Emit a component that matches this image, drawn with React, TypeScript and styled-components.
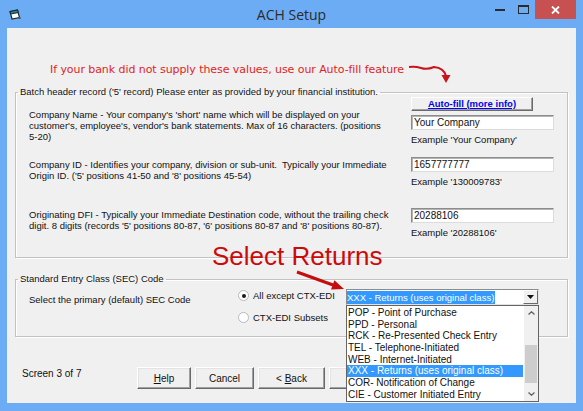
import React from "react";
import styled, { createGlobalStyle } from "styled-components";

const GlobalStyle = createGlobalStyle`
  html, body {
    margin: 0;
    padding: 0;
    background: #6cacf4;
  }
  body {
    font-family: "Liberation Sans", Arial, sans-serif;
  }
`;

const Frame = styled.div`
  width: 583px;
  height: 411px;
  box-sizing: border-box;
  padding: 0 7px 8px 7px;
  background: #6cacf4;
  display: flex;
  flex-direction: column;
  overflow: hidden;
`;

/* ---------- title bar ---------- */

const TitleBar = styled.div`
  height: 28px;
  flex: 0 0 28px;
  display: grid;
  grid-template-columns: 1fr auto 1fr;
  align-items: start;
`;

const AppIcon = styled.svg`
  margin: 9px 0 0 2px;
`;

const Title = styled.div`
  font-family: "Open Sans", "Noto Sans", sans-serif;
  font-size: 14px;
  line-height: 26px;
  padding-top: 2px;
  color: #2b2b2b;
`;

const Controls = styled.div`
  justify-self: end;
  display: flex;
  align-items: stretch;
  height: 19px;
`;

const CtrlButton = styled.div<{ $w: number; $close?: boolean }>`
  width: ${(p) => p.$w}px;
  display: flex;
  align-items: center;
  justify-content: center;
  background: ${(p) => (p.$close ? "#c75050" : "transparent")};
`;

/* ---------- client area ---------- */

const Client = styled.div`
  flex: 1;
  position: relative;
  background: #f0f0f0;
  padding: 0 8px;
  display: flex;
  flex-direction: column;
  font-size: 9.5px;
  color: #111;
`;

const Hint = styled.div`
  margin-top: 35px;
  padding-left: 35px;
  line-height: 14px;
  font-family: "DejaVu Sans", sans-serif;
  font-size: 11px;
  letter-spacing: -0.07px;
  color: #e21d25;
`;

const Group = styled.fieldset<{ $top: number }>`
  margin: ${(p) => p.$top}px 0 0;
  padding: 0;
  min-width: 0;
  border: 1px solid #c2c2c2;
  box-shadow: 1px 1px 0 #fff, inset 1px 1px 0 #fff;
`;

const GroupTitle = styled.legend`
  margin-left: 2px;
  padding: 0 2px;
  line-height: 12px;
`;

const GroupBody = styled.div<{ $bottom: number }>`
  padding: 0 13px ${(p) => p.$bottom}px;
`;

const FieldRow = styled.div<{ $top: number }>`
  display: grid;
  grid-template-columns: 1fr 143px;
  column-gap: 8px;
  margin-top: ${(p) => p.$top}px;
`;

const Desc = styled.div<{ $pad: number }>`
  padding-top: ${(p) => p.$pad}px;
  line-height: 11px;
  white-space: nowrap;
`;

const FieldCol = styled.div`
  display: flex;
  flex-direction: column;
`;

const LinkButton = styled.div`
  width: 122px;
  height: 14px;
  box-sizing: border-box;
  margin-bottom: 4px;
  background: #f0f0f0;
  border: 1px solid;
  border-color: #fff #6a6a6a #6a6a6a #fff;
  box-shadow: inset -1px -1px 0 #a0a0a0;
  display: flex;
  align-items: center;
  justify-content: center;
  font-weight: bold;
  color: #0000f0;
  text-decoration: underline;
  line-height: 12px;
`;

const TextBox = styled.div`
  height: 15px;
  box-sizing: border-box;
  background: #fff;
  border: 1px solid;
  border-color: #8c8c8c #dcdcdc #dcdcdc #8c8c8c;
  box-shadow: inset 1px 1px 0 #b4b4b4;
  padding-left: 2px;
  line-height: 13px;
  font-size: 10px;
`;

const Example = styled.div`
  margin-top: 4px;
  line-height: 11px;
`;

/* ---------- SEC code group ---------- */

const SecRow = styled.div`
  display: flex;
  align-items: flex-start;
`;

const SecLabel = styled.div`
  flex: 0 0 208px;
  padding-top: 9px;
  line-height: 11px;
`;

const RadioCol = styled.div`
  flex: 0 0 109px;
  padding-top: 4px;
  display: flex;
  flex-direction: column;
  gap: 9px;
`;

const RadioItem = styled.div`
  display: flex;
  align-items: center;
  gap: 4px;
  height: 13px;
  padding-left: 1px;
`;

const RadioDot = styled.span<{ $on?: boolean }>`
  width: 11px;
  height: 11px;
  box-sizing: border-box;
  border-radius: 50%;
  border: 1px solid #b9b9b9;
  background: #fff;
  display: flex;
  align-items: center;
  justify-content: center;
  &::after {
    content: "";
    width: 4px;
    height: 4px;
    border-radius: 50%;
    background: ${(p) => (p.$on ? "#1a1a1a" : "transparent")};
  }
`;

const Combo = styled.div`
  margin-top: 4px;
  width: 193px;
  height: 16px;
  box-sizing: border-box;
  background: #fff;
  border: 1px solid;
  border-color: #8c8c8c #e3e3e3 #e3e3e3 #8c8c8c;
  display: flex;
  align-items: stretch;
`;

const ComboText = styled.div`
  flex: 1;
  display: flex;
  align-items: center;
`;

const Selected = styled.span`
  background: #3399ff;
  color: #fff;
  line-height: 13px;
  padding-right: 1px;
`;

const ComboArrow = styled.div`
  width: 15px;
  box-sizing: border-box;
  background: #f0f0f0;
  border: 1px solid;
  border-color: #fff #6a6a6a #6a6a6a #fff;
  display: flex;
  align-items: center;
  justify-content: center;
`;

/* ---------- footer ---------- */

const Footer = styled.div`
  margin-top: 30px;
  padding-left: 7px;
  display: flex;
  align-items: flex-start;
  gap: 4px;
`;

const ScreenLabel = styled.div`
  flex: 0 0 111px;
  line-height: 11px;
  padding-top: 1px;
  font-size: 10px;
`;

const PushButton = styled.div<{ $w: number }>`
  width: ${(p) => p.$w}px;
  height: 22px;
  box-sizing: border-box;
  background: #f0f0f0;
  border: 1px solid;
  border-color: #fff #696969 #696969 #fff;
  box-shadow: inset -1px -1px 0 #a0a0a0, inset 1px 1px 0 #e3e3e3;
  display: flex;
  align-items: center;
  justify-content: center;
  font-size: 10px;
  u {
    text-decoration: underline;
  }
`;

/* ---------- overlays: notes and open list ---------- */

const Note = styled.div`
  position: absolute;
  left: 205px;
  top: 215px;
  font-size: 26px;
  line-height: 26px;
  color: #cc0a0a;
  white-space: nowrap;
`;

const NoteArrow = styled.svg<{ $x: number; $y: number }>`
  position: absolute;
  left: ${(p) => p.$x}px;
  top: ${(p) => p.$y}px;
  overflow: visible;
`;

const DropList = styled.div`
  position: absolute;
  left: 339px;
  top: 277px;
  width: 193px;
  box-sizing: border-box;
  background: #fff;
  border: 1px solid #646464;
  display: flex;
`;

const Items = styled.div`
  flex: 1;
  padding: 1px 0;
`;

const DropItem = styled.div<{ $selected?: boolean }>`
  height: 11.66px;
  line-height: 11.66px;
  padding-left: 1px;
  margin-right: 1px;
  font-size: 10px;
  white-space: nowrap;
  background: ${(p) => (p.$selected ? "#3399ff" : "transparent")};
  color: ${(p) => (p.$selected ? "#fff" : "#111")};
`;

const ScrollBar = styled.div`
  flex: 0 0 14px;
  background: #f0f0f0;
  display: flex;
  flex-direction: column;
`;

const ScrollBtn = styled.div`
  height: 14px;
  display: flex;
  align-items: center;
  justify-content: center;
`;

const ScrollTrack = styled.div`
  flex: 1;
  display: flex;
  flex-direction: column;
  padding: 0 1px;
`;

const Thumb = styled.div`
  height: 38px;
  background: #cdcdcd;
`;

const secCodes = [
  "POP - Point of Purchase",
  "PPD - Personal",
  "RCK - Re-Presented Check Entry",
  "TEL - Telephone-Initiated",
  "WEB - Internet-Initiated",
  "XXX - Returns (uses original class)",
  "COR- Notification of Change",
  "CIE - Customer Initiated Entry",
];

const selectedCode = 5;
const thumbOffset = 25;

export default function App() {
  return (
    <Frame>
      <GlobalStyle />
      <TitleBar>
        <AppIcon width="12" height="11" viewBox="0 0 12 11">
          <path d="M1 2.5 L8.5 1 L10.5 8.5 L3 10 Z" fill="#fff" stroke="#1d2a30" strokeWidth="1.2" />
          <path d="M1 2.5 L8.5 1 L9.2 3.6 L1.7 5 Z" fill="#1b8a8a" stroke="#1d2a30" strokeWidth="1" />
          <rect x="9.6" y="8" width="2" height="2" fill="#555" />
        </AppIcon>
        <Title>ACH Setup</Title>
        <Controls>
          <CtrlButton $w={25}>
            <svg width="10" height="2" viewBox="0 0 10 2">
              <rect width="10" height="2" fill="#2b2b2b" />
            </svg>
          </CtrlButton>
          <CtrlButton $w={23}>
            <svg width="11" height="9" viewBox="0 0 11 9">
              <rect x="0.5" y="0.5" width="10" height="8" fill="none" stroke="#2b2b2b" />
              <rect x="0" y="0" width="11" height="2" fill="#2b2b2b" />
            </svg>
          </CtrlButton>
          <CtrlButton $w={41} $close>
            <svg width="9" height="8" viewBox="0 0 9 8">
              <path d="M1 0.5 L8 7.5 M8 0.5 L1 7.5" stroke="#fff" strokeWidth="1.8" />
            </svg>
          </CtrlButton>
        </Controls>
      </TitleBar>

      <Client>
        <Hint>If your bank did not supply these values, use our Auto-fill feature</Hint>

        <Group $top={9}>
          <GroupTitle>Batch header record ('5' record) Please enter as provided by your financial institution.</GroupTitle>
          <GroupBody $bottom={19}>
            <FieldRow $top={-1}>
              <Desc $pad={12}>
                Company Name - Your company's 'short' name which will be displayed on your
                <br />
                customer's, employee's, vendor's bank statements. Max of 16 characters. (positions
                <br />
                5-20)
              </Desc>
              <FieldCol>
                <LinkButton>Auto-fill (more info)</LinkButton>
                <TextBox>Your Company</TextBox>
                <Example>Example 'Your Company'</Example>
              </FieldCol>
            </FieldRow>

            <FieldRow $top={12}>
              <Desc $pad={2}>
                Company ID - Identifies your company, division or sub-unit.&nbsp; Typically your Immediate
                <br />
                Origin ID. ('5' positions 41-50 and '8' positions 45-54)
              </Desc>
              <FieldCol>
                <TextBox>1657777777</TextBox>
                <Example>Example '130009783'</Example>
              </FieldCol>
            </FieldRow>

            <FieldRow $top={21}>
              <Desc $pad={1}>
                Originating DFI - Typically your Immediate Destination code, without the trailing check
                <br />
                digit. 8 digits (records '5' positions 80-87, '6' positions 80-87 and '8' positions 80-87).
              </Desc>
              <FieldCol>
                <TextBox>20288106</TextBox>
                <Example>Example '20288106'</Example>
              </FieldCol>
            </FieldRow>
          </GroupBody>
        </Group>

        <Group $top={15}>
          <GroupTitle>Standard Entry Class (SEC) Code</GroupTitle>
          <GroupBody $bottom={12}>
            <SecRow>
              <SecLabel>Select the primary (default) SEC Code</SecLabel>
              <RadioCol>
                <RadioItem>
                  <RadioDot $on />
                  All except CTX-EDI
                </RadioItem>
                <RadioItem>
                  <RadioDot />
                  CTX-EDI Subsets
                </RadioItem>
              </RadioCol>
              <Combo>
                <ComboText>
                  <Selected>{secCodes[selectedCode]}</Selected>
                </ComboText>
                <ComboArrow>
                  <svg width="7" height="4" viewBox="0 0 7 4">
                    <path d="M0 0 H7 L3.5 4 Z" fill="#111" />
                  </svg>
                </ComboArrow>
              </Combo>
            </SecRow>
          </GroupBody>
        </Group>

        <Footer>
          <ScreenLabel>Screen 3 of 7</ScreenLabel>
          <PushButton $w={54}>
            <span>
              <u>H</u>elp
            </span>
          </PushButton>
          <PushButton $w={59}>Cancel</PushButton>
          <PushButton $w={67}>
            <span>
              &lt; <u>B</u>ack
            </span>
          </PushButton>
          {/* next button sits under the open list */}
          <PushButton $w={65} />
        </Footer>

        {/* curved pointer toward the Auto-fill button */}
        <NoteArrow $x={399} $y={36} width="48" height="22" viewBox="0 0 48 22">
          <path d="M3 3 Q9 2 15 4 T28 3 Q38 4 40 12" fill="none" stroke="#c8141c" strokeWidth="2" />
          <path d="M35.5 11 H44.5 L40 19 Z" fill="#c8141c" />
        </NoteArrow>

        <Note>Select Returns</Note>
        <NoteArrow $x={288} $y={240} width="54" height="26" viewBox="0 0 54 26">
          <path d="M2 4 L38 17" stroke="#c40d0d" strokeWidth="3" />
          <path d="M49 21 L36 21.6 L39.4 12.2 Z" fill="#c40d0d" />
        </NoteArrow>

        <DropList>
          <Items>
            {secCodes.map((code, i) => (
              <DropItem key={code} $selected={i === selectedCode}>
                {code}
              </DropItem>
            ))}
          </Items>
          <ScrollBar>
            <ScrollBtn>
              <svg width="7" height="4" viewBox="0 0 7 4">
                <path d="M0.5 3.5 L3.5 0.8 L6.5 3.5" fill="none" stroke="#606060" strokeWidth="1.3" />
              </svg>
            </ScrollBtn>
            <ScrollTrack>
              <Thumb style={{ marginTop: thumbOffset }} />
            </ScrollTrack>
            <ScrollBtn>
              <svg width="7" height="4" viewBox="0 0 7 4">
                <path d="M0.5 0.5 L3.5 3.2 L6.5 0.5" fill="none" stroke="#606060" strokeWidth="1.3" />
              </svg>
            </ScrollBtn>
          </ScrollBar>
        </DropList>
      </Client>
    </Frame>
  );
}
